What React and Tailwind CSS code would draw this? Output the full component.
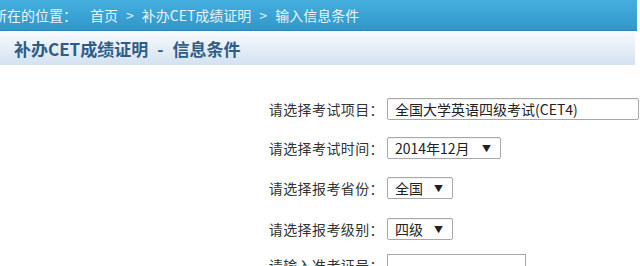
import React from 'react';

const font = { fontFamily: '"Noto Sans CJK SC", "Liberation Sans", sans-serif' };

const Arrow = () => (
  <span className="text-[9px] leading-none text-[#222] ml-auto">▼</span>
);

const SelectBox = ({ value, width, arrow = true }) => (
  <div
    className={`flex items-center h-[22px] ${width} border border-[#a8a8a8] rounded-[2px] bg-white pl-[7px] pr-[9px] text-[14px] text-[#222] shadow-[inset_0_1px_1px_rgba(0,0,0,0.06)]`}
  >
    <span className="whitespace-nowrap">{value}</span>
    {arrow && <Arrow />}
  </div>
);

const FormRow = ({ label, className, children }) => (
  <div className={`flex items-center ${className}`}>
    <div className="w-[384px] text-right text-[14px] tracking-[0.4px] text-[#333] whitespace-nowrap">
      {label}
    </div>
    <div className="ml-[3px]">{children}</div>
  </div>
);

export default function App() {
  return (
    <div className="w-[640px] h-[266px] overflow-hidden bg-white" style={font}>
      {/* breadcrumb bar */}
      <div className="h-[31px] mr-[3px] flex items-center bg-gradient-to-b from-[#45afdf] to-[#2f97c9] border-b border-[#2b85b4] overflow-hidden">
        <div className="flex items-center -ml-[7px] text-[14px] text-[#e6f4fc] whitespace-nowrap">
          <span>所在的位置：</span>
          <span className="ml-[13px]">首页</span>
          <span className="mx-[8px]">&gt;</span>
          <span>补办CET成绩证明</span>
          <span className="mx-[8px]">&gt;</span>
          <span>输入信息条件</span>
        </div>
      </div>

      {/* title bar */}
      <div className="h-[33px] mr-[5px] mt-[1px] flex items-center pl-[14px] bg-gradient-to-b from-[#f7fafd] to-[#d3e2f0]">
        <span className="text-[17px] font-bold text-[#2f5d88] whitespace-nowrap">
          补办CET成绩证明<span className="mx-[9px]">-</span>信息条件
        </span>
      </div>

      {/* form */}
      <div className="pt-[33px]">
        <FormRow label="请选择考试项目：">
          <SelectBox value="全国大学英语四级考试(CET4)" width="w-[252px]" arrow={false} />
        </FormRow>
        <FormRow label="请选择考试时间：" className="mt-[17px]">
          <SelectBox value="2014年12月" width="w-[114px]" />
        </FormRow>
        <FormRow label="请选择报考省份：" className="mt-[18px]">
          <SelectBox value="全国" width="w-[66px]" />
        </FormRow>
        <FormRow label="请选择报考级别：" className="mt-[19px]">
          <SelectBox value="四级" width="w-[66px]" />
        </FormRow>
        <FormRow label="请输入准考证号：" className="mt-[14px]">
          <div className="h-[22px] w-[139px] border border-[#a8a8a8] bg-white" />
        </FormRow>
      </div>
    </div>
  );
}
